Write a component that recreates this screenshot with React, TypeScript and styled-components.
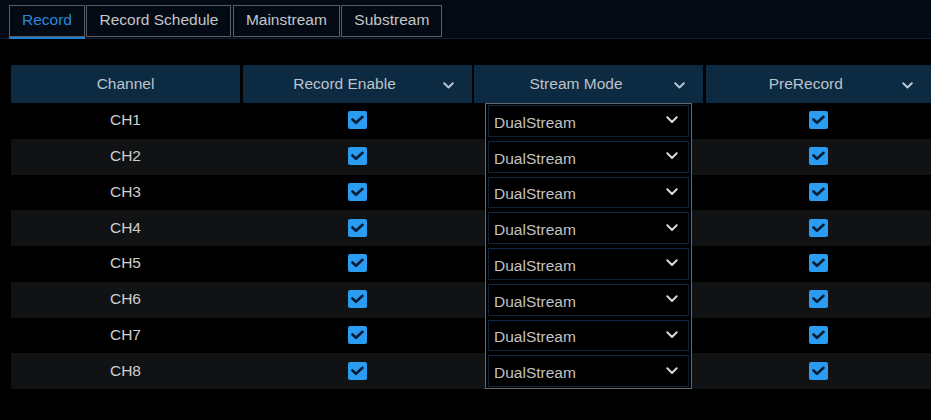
import React from "react";
import styled, { createGlobalStyle } from "styled-components";

const GlobalStyle = createGlobalStyle`
  html, body { margin: 0; padding: 0; background: #000; }
  body { font-family: "Liberation Sans", Arial, sans-serif; -webkit-font-smoothing: antialiased; }
  * { box-sizing: border-box; }
`;

const Page = styled.div`
  width: 931px;
  height: 420px;
  background: #000;
  overflow: hidden;
`;

const TabBar = styled.div`
  display: flex;
  align-items: flex-start;
  gap: 1.5px;
  height: 39px;
  padding: 5px 0 0 9px;
  background: #030a14;
  border-bottom: 1px solid #0b1f34;
`;

const Tab = styled.div<{ $active?: boolean }>`
  height: 31.5px;
  padding: 0 12px;
  display: flex;
  align-items: center;
  padding-bottom: 2px;
  border: 1px solid #5a5d60;
  background: #040a13;
  color: ${(p) => (p.$active ? "#2787dc" : "#c3c6ca")};
  font-size: 15.5px;
  white-space: nowrap;
  box-shadow: ${(p) => (p.$active ? "0 2px 0 #1d7fd8" : "none")};
`;

const Table = styled.div`
  margin: 26px 0 0 11px;
`;

const cols = "229px 229px 229px 1fr";

const HeaderRow = styled.div`
  display: grid;
  grid-template-columns: ${cols};
  column-gap: 2.5px;
  height: 38px;
`;

const HeaderCell = styled.div<{ $menu?: boolean }>`
  display: flex;
  align-items: center;
  justify-content: center;
  position: relative;
  background: #0c2a42;
  color: #bcc3ca;
  font-size: 15.5px;
  padding-right: ${(p) => (p.$menu ? "25px" : "0")};
`;

const HeaderChevron = styled.svg`
  position: absolute;
  right: 18px;
  top: 50%;
  margin-top: -2px;
  width: 11px;
  height: 7px;
`;

const Row = styled.div<{ $shade?: boolean }>`
  display: grid;
  grid-template-columns: ${cols};
  column-gap: 2.5px;
  height: 35.75px;
  background: ${(p) => (p.$shade ? "#111213" : "#000")};
`;

const TextCell = styled.div`
  display: flex;
  align-items: center;
  justify-content: center;
  color: #cfcfcf;
  font-size: 15.5px;
  padding-bottom: 1px;
`;

const CheckCell = styled.div`
  display: flex;
  align-items: center;
  justify-content: center;
  padding-bottom: 1px;
`;

const CheckBox = styled.div`
  width: 19px;
  height: 18px;
  border-radius: 2px;
  background: #2a9cf2;
  display: flex;
  align-items: center;
  justify-content: center;
`;

const StreamCell = styled.div`
  display: flex;
  justify-content: center;
`;

const Frame = styled.div<{ $first?: boolean; $last?: boolean }>`
  width: 207px;
  height: 100%;
  background: #000;
  border-left: 1px solid #66686b;
  border-right: 1px solid #66686b;
  border-top: ${(p) => (p.$first ? "1px solid #66686b" : "none")};
  border-bottom: ${(p) => (p.$last ? "1px solid #66686b" : "none")};
  padding: ${(p) => (p.$first ? "1px" : "2px")} 2px ${(p) => (p.$last ? "1px" : "2px")} 2px;
  display: flex;
  flex-direction: column;
`;

const Select = styled.div`
  flex: 1;
  display: flex;
  align-items: center;
  justify-content: space-between;
  border: 1px solid #0c223b;
  border-top-color: #0e2a4a;
  background: #000;
  padding: 4px 10px 0 5px;
  color: #c2c2c2;
  font-size: 15.5px;
`;

const SelectChevron = styled.svg`
  width: 12px;
  height: 8px;
  margin-top: -5px;
`;

const Check = () => (
  <svg width="13" height="10" viewBox="0 0 13 10">
    <path d="M1.5 4.5 L5 7.8 L11.5 1.8" fill="none" stroke="#0b1c33" strokeWidth="2.6" strokeLinecap="round" strokeLinejoin="round" />
  </svg>
);

const HChevron = () => (
  <HeaderChevron viewBox="0 0 11 7">
    <path d="M1.2 1.2 L5.5 5.5 L9.8 1.2" fill="none" stroke="#b7c6d3" strokeWidth="2" strokeLinecap="round" strokeLinejoin="round" />
  </HeaderChevron>
);

const SChevron = () => (
  <SelectChevron viewBox="0 0 12 8">
    <path d="M1.3 1.3 L6 6 L10.7 1.3" fill="none" stroke="#d8d8d8" strokeWidth="2" strokeLinecap="round" strokeLinejoin="round" />
  </SelectChevron>
);

const tabs = ["Record", "Record Schedule", "Mainstream", "Substream"];
const channels = ["CH1", "CH2", "CH3", "CH4", "CH5", "CH6", "CH7", "CH8"];

export default function App() {
  return (
    <Page>
      <GlobalStyle />
      <TabBar>
        {tabs.map((t, i) => (
          <Tab key={t} $active={i === 0}>
            {t}
          </Tab>
        ))}
      </TabBar>
      <Table>
        <HeaderRow>
          <HeaderCell>Channel</HeaderCell>
          <HeaderCell $menu>
            Record Enable
            <HChevron />
          </HeaderCell>
          <HeaderCell $menu>
            Stream Mode
            <HChevron />
          </HeaderCell>
          <HeaderCell $menu>
            PreRecord
            <HChevron />
          </HeaderCell>
        </HeaderRow>
        {channels.map((ch, i) => (
          <Row key={ch} $shade={i % 2 === 1}>
            <TextCell>{ch}</TextCell>
            <CheckCell>
              <CheckBox>
                <Check />
              </CheckBox>
            </CheckCell>
            <StreamCell>
              <Frame $first={i === 0} $last={i === channels.length - 1}>
                <Select>
                  DualStream
                  <SChevron />
                </Select>
              </Frame>
            </StreamCell>
            <CheckCell>
              <CheckBox>
                <Check />
              </CheckBox>
            </CheckCell>
          </Row>
        ))}
      </Table>
    </Page>
  );
}
